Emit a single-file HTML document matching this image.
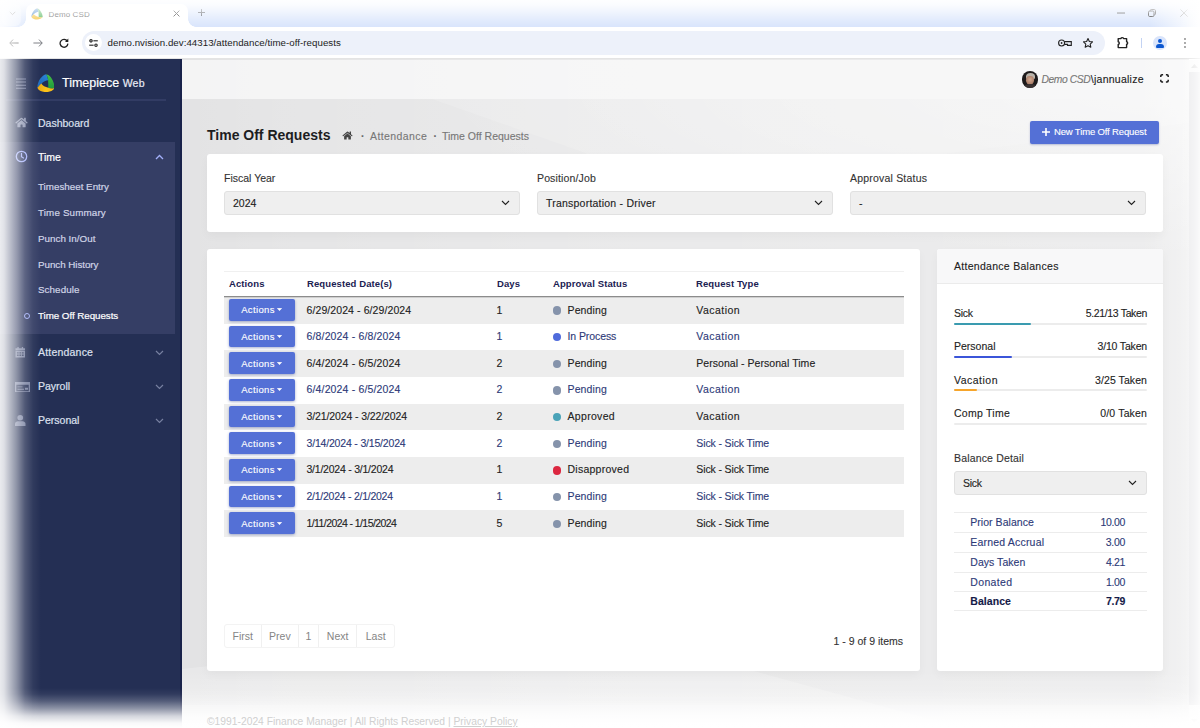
<!DOCTYPE html>
<html lang="en">
<head>
<meta charset="utf-8">
<title>Demo CSD</title>
<style>
*{box-sizing:border-box;margin:0;padding:0}
html,body{width:1200px;height:728px;overflow:hidden;background:#fff}
body{font-family:"Liberation Sans",sans-serif;font-size:11px;color:#222;position:relative;-webkit-text-stroke:.12px}
.abs{position:absolute}
svg{display:block}
/* ---------- browser chrome ---------- */
#tabstrip{left:0;top:0;width:1200px;height:27px;background:#d9e5fc}
#tab{left:26px;top:4px;width:162px;height:23px;background:#fff;border-radius:7px 7px 0 0}
#tab .t{left:22.500px;top:5.500px;font-size:8px;color:#505050;letter-spacing:.1px;white-space:nowrap}
#toolbar{left:0;top:27px;width:1200px;height:32px;background:#fff;border-bottom:1px solid #e4e4e4}
#omni{left:82px;top:4px;width:1022.500px;height:23.600px;border-radius:12px;background:#edf1fa}
#omni .u{left:25.500px;top:6.200px;font-size:9.700px;color:#222;letter-spacing:.05px;white-space:nowrap}
/* ---------- app ---------- */
#side{left:0;top:59px;width:182px;height:669px;background:#242f54;border-right:2px solid #19224a}
#side .sec{left:0;top:83px;width:175px;height:192px;background:#353e65}
#side .hr{left:6px;top:40px;width:160px;height:2px;background:#323c64}
.nav{color:#dde0ee;font-size:10.5px;white-space:nowrap}
.sub{color:#d0d4e6;font-size:9.800px;white-space:nowrap}
#main{left:182px;top:59px;width:1007px;height:669px;background:#e3e3e4;overflow:hidden}
#hdr{left:0;top:1px;width:1007px;height:39px;background:rgba(255,255,255,.6)}
.card{background:#fff;border-radius:3px;box-shadow:0 4px 10px rgba(0,0,0,.035)}
.lbl{font-size:10.5px;color:#333;white-space:nowrap}
.sel{height:24px;background:#efefef;border:1px solid #e1e1e1;border-radius:3px}
.sel>span{position:absolute;left:8px;top:5px;font-size:10.5px;color:#222;white-space:nowrap}
.sel svg{position:absolute;right:9px;top:8px}

#bg{left:0;top:0;width:1007px;height:669px}
.bc{top:71px;font-size:10.5px;color:#777;white-space:nowrap}
.th{-webkit-text-stroke:0;top:28.600px;font-size:9.5px;font-weight:700;color:#1b2152;white-space:nowrap;letter-spacing:.1px}
.row{position:absolute;left:0;width:680px;height:26.65px}
.row.odd{background:#ededed}
.row.even{color:#2d3a78}
.row .c{top:6.500px;font-size:10.5px;white-space:nowrap;letter-spacing:.1px}
.abtn{left:5.200px;top:2.200px;width:65.800px;height:21.600px;background:#5470d6;border-radius:2px;box-shadow:0 1px 3px rgba(40,60,140,.4)}
.abtn span{position:absolute;left:12px;top:5.300px;font-size:9.500px;color:#fff;letter-spacing:0.350px}
.abtn svg{position:absolute;left:47.700px;top:9.200px}
.dot{left:328.800px;top:9.400px;width:8.400px;height:8.400px;border-radius:50%}
.pg{border:1px solid #f3f3f3;border-radius:3px;display:flex}
.pg span{border-color:#f3f3f3;display:block;height:22px;line-height:22px;text-align:center;font-size:10.5px;color:#858585;-webkit-text-stroke:0;border-right:1px solid #f0f0f0}
.bal{left:17px;width:193px;height:20px}
.bal>span{position:absolute;left:0;top:.700px;font-size:10.5px;color:#222;white-space:nowrap}
.bal b{position:absolute;right:0;top:.700px;font-size:10.5px;font-weight:400;color:#222;white-space:nowrap}
.bal i{position:absolute;left:0;top:16px;width:193px;height:2px;background:#ececec;border-radius:1px}
.bal u{display:block;height:2px;border-radius:1px}
.dt{left:17px;width:193px;height:20px;border-top:1px solid #ececec;color:#2d3a78;font-size:10.5px}
.dt>span{position:absolute;left:16.300px;top:3px;white-space:nowrap}
.dt b{position:absolute;right:22px;top:3px;font-weight:400;white-space:nowrap}
.dt.tot{border-bottom:1px solid #ececec;color:#151a48;font-weight:700}
.dt.tot b{font-weight:700}
#scroll{left:1189px;top:60px;width:11px;height:668px;background:#fbfbfb}
#scroll .thumb{left:0;top:12px;width:11px;height:633px;background:#ececee}
#vig{left:0;top:0;width:1200px;height:728px;pointer-events:none;
 background:
  linear-gradient(to right,rgba(255,255,255,.9) 0,rgba(255,255,255,.85) 4px,rgba(255,255,255,.7) 9px,rgba(255,255,255,.47) 17px,rgba(255,255,255,.2) 25px,rgba(255,255,255,.06) 33px,rgba(255,255,255,0) 41px) left/42px 100% no-repeat,
  linear-gradient(to top,#fff 0,rgba(255,255,255,.97) 5px,rgba(255,255,255,.8) 12px,rgba(255,255,255,.5) 19px,rgba(255,255,255,.22) 27px,rgba(255,255,255,.06) 34px,rgba(255,255,255,0) 40px) bottom/100% 42px no-repeat,
  linear-gradient(to left,rgba(255,255,255,.75) 0,rgba(255,255,255,.4) 6px,rgba(255,255,255,.12) 14px,rgba(255,255,255,0) 22px) right/24px 100% no-repeat,
  linear-gradient(to bottom,rgba(255,255,255,.97) 0,rgba(255,255,255,.88) 5px,rgba(255,255,255,.6) 12px,rgba(255,255,255,.25) 20px,rgba(255,255,255,0) 27px) top/100% 27px no-repeat}
#tabstrip,#toolbar{-webkit-text-stroke:0}
#foot{left:207px;top:716px;font-size:10.300px;color:#d0d0d0;white-space:nowrap;-webkit-text-stroke:0}
#side{-webkit-text-stroke:.2px}
</style>
</head>
<body>
<!-- browser chrome -->
<div id="tabstrip" class="abs">
  <div class="abs" style="left:2px;top:4px;width:19px;height:22px;border-radius:6px;background:rgba(255,255,255,.35)"></div>
  <svg class="abs" style="left:9px;top:11px" width="7" height="5" viewBox="0 0 7 5"><path d="M.7.8 3.500 3.600 6.300.8" fill="none" stroke="#555" stroke-width="1"/></svg>
  <div id="tab" class="abs">
    <svg class="abs" style="left:5px;top:4px" width="12" height="12" viewBox="0 0 100 100" opacity=".85">
      <path d="M52 2 C25 12 4 45 3 74 L22 52 C35 38 50 32 63 31 L58 12 Z" fill="#1f6fc4"/>
      <path d="M52 2 C75 12 96 45 98 76 C88 79 75 79 64 76 L63 31 C62 20 58 10 52 2Z" fill="#2fa83a"/>
      <path d="M3 74 C25 104 80 100 98 76 C85 80 72 78 64 74 C45 70 30 62 22 50 Z" fill="#f5b916"/>
    </svg>
    <span class="t abs">Demo CSD</span>
    <svg class="abs" style="left:147px;top:6px" width="7" height="7" viewBox="0 0 7 7"><path d="M.6.600 6.400 6.400M6.400.600.600 6.400" stroke="#333" stroke-width="1"/></svg>
  </div>
  <div class="abs" style="left:18px;top:19px;width:8px;height:8px;background:radial-gradient(circle at 0 0,transparent 7.500px,#fff 8px)"></div>
  <div class="abs" style="left:188px;top:19px;width:8px;height:8px;background:radial-gradient(circle at 100% 0,transparent 7.500px,#fff 8px)"></div>
  <svg class="abs" style="left:198px;top:9px" width="7" height="7" viewBox="0 0 7 7"><path d="M3.500 0v7M0 3.500h7" stroke="#4a4f58" stroke-width="1"/></svg>
  <!-- window controls -->
  <svg class="abs" style="left:1117px;top:12px" width="8" height="2" viewBox="0 0 8 2"><path d="M0 1h8" stroke="#2a2a2a" stroke-width="1"/></svg>
  <svg class="abs" style="left:1148px;top:9px" width="8" height="8" viewBox="0 0 8 8"><rect x=".5" y="2" width="5.500" height="5.500" rx="1.200" fill="none" stroke="#2a2a2a" stroke-width="1"/><path d="M2.300 1.500V1.400C2.300.9 2.700.5 3.200.5H6.300C7 .5 7.500 1 7.500 1.700V4.800C7.500 5.300 7.100 5.700 6.600 5.700" fill="none" stroke="#2a2a2a" stroke-width="1"/></svg>
  <svg class="abs" style="left:1180px;top:9px" width="8" height="8" viewBox="0 0 8 8"><path d="M.4.400 7.600 7.600M7.600.400.400 7.600" stroke="#2a2a2a" stroke-width="1"/></svg>
  <div class="abs" style="left:1150px;top:0;width:50px;height:27px;background:linear-gradient(to right,rgba(255,255,255,0),rgba(255,255,255,.55) 55%,rgba(255,255,255,.95))"></div>
</div>
<div id="toolbar" class="abs">
  <svg class="abs" style="left:9px;top:12px" width="10" height="8" viewBox="0 0 10 8"><path d="M4 .600.800 4 4 7.400M.800 4H9.600" fill="none" stroke="#555" stroke-width="1"/></svg>
  <svg class="abs" style="left:33px;top:12px" width="10" height="8" viewBox="0 0 10 8"><path d="M6 .600 9.200 4 6 7.400M9.200 4H.4" fill="none" stroke="#7a7d82" stroke-width="1"/></svg>
  <svg class="abs" style="left:59px;top:11px" width="10" height="10" viewBox="0 0 10 10"><path d="M8.300 3.200A3.900 3.900 0 1 0 8.900 5.600" fill="none" stroke="#222" stroke-width="1.300"/><path d="M9.300.600V3.900H6z" fill="#222"/></svg>
  <div id="omni" class="abs">
    <div class="abs" style="left:3.300px;top:3.300px;width:17px;height:17px;border-radius:50%;background:#fff"></div>
    <svg class="abs" style="left:7.300px;top:7.800px" width="9" height="8" viewBox="0 0 9 8"><g fill="none" stroke="#222" stroke-width="1.100"><circle cx="2" cy="1.800" r="1.200"/><path d="M4.400 1.800H8.800"/><circle cx="7" cy="6.200" r="1.200"/><path d="M.2 6.200H4.600"/></g></svg>
    <span class="u abs">demo.nvision.dev:44313/attendance/time-off-requests</span>
    <svg class="abs" style="left:976px;top:8px" width="14" height="8" viewBox="0 0 14 8"><circle cx="3.600" cy="4" r="3" fill="none" stroke="#222" stroke-width="1.100"/><circle cx="3.600" cy="4" r=".9" fill="#222"/><path d="M6.500 2.600H13.300V6.400H9.500V5.400H6.500" fill="none" stroke="#222" stroke-width="1.100"/></svg>
    <svg class="abs" style="left:1000px;top:6px" width="12" height="12" viewBox="0 0 24 24"><path d="M12 3.200l2.700 5.800 6.300.8-4.600 4.300 1.200 6.300L12 17.300 6.400 20.400l1.200-6.300L3 9.800l6.300-.8z" fill="none" stroke="#222" stroke-width="2.200" stroke-linejoin="round"/></svg>
  </div>
  <svg class="abs" style="left:1116px;top:9px" width="14" height="13" viewBox="0 0 14 13"><path d="M5 2.600C5 1.300 7.600 1.300 7.600 2.600H10.600V5.800C12 5.800 12 8.200 10.600 8.200V11.600H2.200V8.400C3.600 8.400 3.600 5.800 2.200 5.800V2.600Z" fill="none" stroke="#222" stroke-width="1.400" stroke-linejoin="round"/></svg>
  <div class="abs" style="left:1141px;top:11px;width:1px;height:10px;background:#c3d3f3"></div>
  <div class="abs" style="left:1153px;top:9px;width:14px;height:14px;border-radius:50%;background:#d9e4fb;overflow:hidden">
    <div class="abs" style="left:5px;top:3px;width:4px;height:4px;border-radius:50%;background:#0b57d0"></div>
    <div class="abs" style="left:3px;top:8px;width:8px;height:4px;border-radius:3px 3px 1px 1px;background:#0b57d0"></div>
  </div>
  <svg class="abs" style="left:1184px;top:11px" width="2" height="10" viewBox="0 0 2 10"><g fill="#777"><circle cx="1" cy="1" r=".9"/><circle cx="1" cy="5" r=".9"/><circle cx="1" cy="9" r=".9"/></g></svg>
</div>

<div id="side" class="abs">
  <!-- hamburger -->
  <svg class="abs" style="left:16px;top:18.600px" width="10.200" height="11.400" viewBox="0 0 11 12" preserveAspectRatio="none"><g stroke="#7780a0" stroke-width="1.1"><path d="M0 1h11M0 4.3h11M0 7.6h11M0 10.9h11"/></g></svg>
  <!-- logo -->
  <svg class="abs" style="left:36.600px;top:14.900px" width="17.700" height="18.400" viewBox="0 0 100 100">
    <defs>
      <linearGradient id="gb" x1="0" y1="1" x2="1" y2="0"><stop offset="0" stop-color="#1b62b5"/><stop offset="1" stop-color="#2b86d9"/></linearGradient>
      <linearGradient id="gg" x1="0" y1="0" x2="0" y2="1"><stop offset="0" stop-color="#45c043"/><stop offset="1" stop-color="#1f9a3c"/></linearGradient>
      <linearGradient id="gy" x1="0" y1="0" x2="1" y2="0"><stop offset="0" stop-color="#e9a512"/><stop offset=".5" stop-color="#fcc419"/><stop offset="1" stop-color="#f5b916"/></linearGradient>
    </defs>
    <path d="M52 0 C28 4 2 40 2 76 L24 54 C36 40 50 34 63 33 L58 12 Z" fill="url(#gb)"/>
    <path d="M52 0 C78 4 99 44 99 78 C88 81 75 80 64 77 L63 33 C62 20 58 10 52 0Z" fill="url(#gg)"/>
    <path d="M2 76 C14 108 88 108 99 78 C85 82 72 80 64 76 C46 72 32 64 24 52 Z" fill="url(#gy)"/>
  </svg>
  <span class="abs" style="left:62px;top:17px;font-size:12.5px;color:#fff;white-space:nowrap">Timepiece <span style="font-size:10.5px;color:#e9ebf5;letter-spacing:.2px">Web</span></span>
  <div class="hr abs"></div>
  <div class="sec abs"></div>
  <!-- dashboard -->
  <svg class="abs" style="left:15px;top:58px" width="13" height="11" viewBox="0 0 576 512"><path fill="#8a92af" d="M280.4 148.3 96 300.1V464a16 16 0 0 0 16 16l112.100-.3a16 16 0 0 0 15.900-16V368a16 16 0 0 1 16-16h64a16 16 0 0 1 16 16v95.600a16 16 0 0 0 16 16.100L464 480a16 16 0 0 0 16-16V300L295.700 148.300a12.200 12.200 0 0 0-15.300 0zM571.600 251.500 488 182.600V44.100a12 12 0 0 0-12-12h-56a12 12 0 0 0-12 12v72.600L318.500 43a48 48 0 0 0-61 0L4.300 251.500a12 12 0 0 0-1.600 16.900l25.500 31a12 12 0 0 0 16.900 1.600l235.300-193.800a12.200 12.200 0 0 1 15.300 0L530.900 301a12 12 0 0 0 16.900-1.600l25.500-31a12 12 0 0 0-1.700-16.900z"/></svg>
  <span class="nav abs" style="left:38px;top:58px">Dashboard</span>
  <!-- time -->
  <svg class="abs" style="left:15px;top:91.400px" width="13" height="13" viewBox="0 0 13 13"><circle cx="6.500" cy="6.500" r="5.200" fill="none" stroke="#a3b0fa" stroke-width="1.300"/><path d="M6.500 3.400V6.700L8.500 8" fill="none" stroke="#a3b0fa" stroke-width="1.200" stroke-linecap="round"/></svg>
  <span class="nav abs" style="left:38px;top:92px;color:#fff">Time</span>
  <svg class="abs" style="left:155px;top:95px" width="9" height="6" viewBox="0 0 9 6"><path d="M1 5 4.500 1.500 8 5" fill="none" stroke="#a3b0fa" stroke-width="1.300"/></svg>
  <span class="sub abs" style="left:38px;top:122px;letter-spacing:0.001px">Timesheet Entry</span>
  <span class="sub abs" style="left:38px;top:148px;letter-spacing:0.153px">Time Summary</span>
  <span class="sub abs" style="left:38px;top:174px;letter-spacing:0.017px">Punch In/Out</span>
  <span class="sub abs" style="left:38px;top:200px;letter-spacing:-0.046px">Punch History</span>
  <span class="sub abs" style="left:38px;top:225px;letter-spacing:0.079px">Schedule</span>
  <div class="abs" style="left:24px;top:254px;width:6px;height:6px;border:1.500px solid #a3b0fa;border-radius:50%"></div>
  <span class="sub abs" style="left:38px;top:251px;color:#fff;letter-spacing:-0.056px">Time Off Requests</span>
  <!-- attendance -->
  <svg class="abs" style="left:15px;top:287.800px" width="10.500" height="11" viewBox="0 0 11 13" preserveAspectRatio="none"><path fill="#7780a0" d="M2.500 0h1.400v1.600h3.200V0h1.400v1.600H10.500V4H.5V1.600h2zM.5 4.800h10V12.500H.5zM2 6.200v1.600h1.800V6.200zM4.600 6.200v1.600h1.800V6.200zM7.200 6.200v1.600H9V6.200zM2 9v1.600h1.800V9zM4.600 9v1.600h1.800V9zM7.200 9v1.600H9V9z" fill-rule="evenodd"/></svg>
  <span class="nav abs" style="left:38px;top:287px;letter-spacing:.2px">Attendance</span>
  <svg class="abs" style="left:155px;top:291px" width="9" height="6" viewBox="0 0 9 6"><path d="M1 1 4.500 4.500 8 1" fill="none" stroke="#7780a0" stroke-width="1.200"/></svg>
  <!-- payroll -->
  <svg class="abs" style="left:15px;top:322.600px" width="15" height="10.500" preserveAspectRatio="none" viewBox="0 0 15 11"><path fill="#7780a0" fill-rule="evenodd" d="M0 0h15v11H0zM1.300 3v6.700h12.400V3zM2.500 4.600h5v1h-5zM2.500 7h6.500v1H2.500zM10 6h3v2h-3z"/></svg>
  <span class="nav abs" style="left:38px;top:321px">Payroll</span>
  <svg class="abs" style="left:155px;top:325px" width="9" height="6" viewBox="0 0 9 6"><path d="M1 1 4.500 4.500 8 1" fill="none" stroke="#7780a0" stroke-width="1.200"/></svg>
  <!-- personal -->
  <svg class="abs" style="left:15.400px;top:356.300px" width="10.500" height="11" viewBox="0 0 11 12" preserveAspectRatio="none"><circle cx="5.500" cy="3" r="3" fill="#7780a0"/><path d="M0 12V9.500C0 7.800 1.600 6.800 3 6.800h5c1.400 0 3 1 3 2.700V12z" fill="#7780a0"/></svg>
  <span class="nav abs" style="left:38px;top:355px">Personal</span>
  <svg class="abs" style="left:155px;top:359px" width="9" height="6" viewBox="0 0 9 6"><path d="M1 1 4.500 4.500 8 1" fill="none" stroke="#7780a0" stroke-width="1.200"/></svg>
</div>
<!-- main -->
<div id="main" class="abs">
  <svg id="bg" class="abs" width="1007" height="669" viewBox="0 0 1007 669">
    <defs>
      <linearGradient id="lg1" x1="0" y1="0" x2="1" y2="0"><stop offset="0" stop-color="#fff" stop-opacity="0"/><stop offset=".1" stop-color="#fff" stop-opacity=".1"/><stop offset=".4" stop-color="#fff" stop-opacity=".24"/><stop offset=".96" stop-color="#fff" stop-opacity=".34"/><stop offset="1" stop-color="#fff" stop-opacity=".55"/></linearGradient>
      <radialGradient id="lg2" cx="0" cy="0" r="1" gradientUnits="userSpaceOnUse" gradientTransform="translate(1007 30) scale(760 170)"><stop offset="0" stop-color="#fff" stop-opacity=".6"/><stop offset=".5" stop-color="#fff" stop-opacity=".3"/><stop offset="1" stop-color="#fff" stop-opacity="0"/></radialGradient>
      <linearGradient id="lg3" x1="0" y1="0" x2="0" y2="1"><stop offset="0" stop-color="#fff" stop-opacity="0"/><stop offset="1" stop-color="#fff" stop-opacity=".3"/></linearGradient>
    </defs>
    <rect x="0" y="0" width="1007" height="669" fill="url(#lg1)"/>
    <rect x="0" y="40" width="1007" height="200" fill="url(#lg2)"/>
    <polygon points="250,40 1007,40 1007,64 500,128" fill="#fff" opacity=".14"/>
    <polygon points="0,610 400,565 780,669 0,669" fill="#fff" opacity=".2"/>
    <rect x="0" y="612" width="1007" height="34" fill="url(#lg3)"/>
    <rect x="0" y="646" width="1007" height="23" fill="#fff" opacity=".42"/>
  </svg>
  <div id="hdr" class="abs"></div>
  <!-- user -->
  <div class="abs" style="left:839.700px;top:12px;width:16.600px;height:16.600px;border-radius:50%;overflow:hidden;background:#1d1a1b">
    <div class="abs" style="left:4px;top:2px;width:9px;height:7px;border-radius:50% 50% 40% 40%;background:#b9b3aa"></div>
    <div class="abs" style="left:4.500px;top:4.500px;width:8px;height:9.500px;border-radius:45% 45% 50% 50%;background:radial-gradient(circle at 50% 40%,#d3aa92,#a87b66 70%,#6f4e42)"></div>
    <div class="abs" style="left:2px;top:13px;width:13px;height:5px;border-radius:50% 50% 0 0;background:#3a3232"></div>
  </div>
  <span class="abs" style="left:859.500px;top:14px;font-size:10.500px;white-space:nowrap;color:#222"><i style="display:inline-block;width:49.300px;color:#777;font-size:10.300px;letter-spacing:-.42px">Demo CSD</i><span style="letter-spacing:.25px">\jannualize</span></span>
  <svg class="abs" style="left:978px;top:15.300px" width="9" height="8.700" viewBox="0 0 9 8.700"><path d="M.8 3V2A1.200 1.200 0 0 1 2 .8H3.100M5.900 .8H7A1.200 1.200 0 0 1 8.200 2V3M8.200 5.700V6.700A1.200 1.200 0 0 1 7 7.900H5.900M3.100 7.900H2A1.200 1.200 0 0 1 .8 6.700V5.700" fill="none" stroke="#1c1c1c" stroke-width="1.500"/></svg>
  <!-- title -->
  <span class="abs" style="left:25px;top:68px;font-size:14px;font-weight:700;color:#1d1d1f;-webkit-text-stroke:0;white-space:nowrap">Time Off Requests</span>
  <svg class="abs" style="left:160px;top:72px" width="11" height="9" viewBox="0 0 576 512"><path fill="#444" d="M280.4 148.3 96 300.1V464a16 16 0 0 0 16 16l112.100-.3a16 16 0 0 0 15.900-16V368a16 16 0 0 1 16-16h64a16 16 0 0 1 16 16v95.600a16 16 0 0 0 16 16.100L464 480a16 16 0 0 0 16-16V300L295.700 148.300a12.200 12.200 0 0 0-15.300 0zM571.600 251.500 488 182.600V44.100a12 12 0 0 0-12-12h-56a12 12 0 0 0-12 12v72.600L318.500 43a48 48 0 0 0-61 0L4.300 251.500a12 12 0 0 0-1.600 16.900l25.500 31a12 12 0 0 0 16.900 1.600l235.300-193.800a12.200 12.200 0 0 1 15.300 0L530.900 301a12 12 0 0 0 16.900-1.600l25.500-31a12 12 0 0 0-1.700-16.900z"/></svg>
  <span class="bc abs" style="left:179px;font-weight:700;color:#666">&middot;</span>
  <span class="bc abs" style="left:188px;letter-spacing:.4px">Attendance</span>
  <span class="bc abs" style="left:251.500px;font-weight:700;color:#666">&middot;</span>
  <span class="bc abs" style="left:260px">Time Off Requests</span>
  <!-- new button -->
  <div class="abs" style="left:848px;top:62px;width:129.200px;height:22.600px;background:#5470d6;border-radius:2px;box-shadow:0 1px 2px rgba(40,60,140,.3)">
    <svg class="abs" style="left:12px;top:7px" width="8" height="8" viewBox="0 0 8 8"><path d="M4 0v8M0 4h8" stroke="#fff" stroke-width="1.600"/></svg>
    <span class="abs" style="left:24px;top:5px;font-size:9.5px;color:#fff;white-space:nowrap;letter-spacing:-.15px">New Time Off Request</span>
  </div>
  <!-- filter card -->
  <div class="card abs" style="left:25px;top:95px;width:956px;height:78px">
    <span class="lbl abs" style="left:17px;top:17.700px">Fiscal Year</span>
    <div class="sel abs" style="left:17px;top:37px;width:296px"><span>2024</span><svg width="9" height="6" viewBox="0 0 9 6"><path d="M1 1 4.5 4.5 8 1" fill="none" stroke="#222" stroke-width="1.1"/></svg></div>
    <span class="lbl abs" style="left:330px;top:17.700px;letter-spacing:.14px">Position/Job</span>
    <div class="sel abs" style="left:330px;top:37px;width:296px"><span style="letter-spacing:.22px">Transportation - Driver</span><svg width="9" height="6" viewBox="0 0 9 6"><path d="M1 1 4.5 4.5 8 1" fill="none" stroke="#222" stroke-width="1.1"/></svg></div>
    <span class="lbl abs" style="left:643px;top:17.700px;letter-spacing:.2px">Approval Status</span>
    <div class="sel abs" style="left:643px;top:37px;width:296px"><span>-</span><svg width="9" height="6" viewBox="0 0 9 6"><path d="M1 1 4.5 4.5 8 1" fill="none" stroke="#222" stroke-width="1.1"/></svg></div>
  </div>
  <!-- table card -->
  <div class="card abs" style="left:25px;top:190px;width:713px;height:421.500px">
    <div class="abs" style="left:17px;top:22px;width:680px;height:1px;background:#f0f0f0"></div>
    <span class="th abs" style="left:22px">Actions</span>
    <span class="th abs" style="left:100px">Requested Date(s)</span>
    <span class="th abs" style="left:290px">Days</span>
    <span class="th abs" style="left:346px">Approval Status</span>
    <span class="th abs" style="left:489px">Request Type</span>
    
    <div id="rows" class="abs" style="left:17px;top:0;width:680px">
    <div class="row odd" style="top:48.00px">
      <div class="abtn abs"><span>Actions</span><svg width="5" height="3" viewBox="0 0 5 3"><path d="M.3.300h4.400L2.500 2.700z" fill="#fff" stroke="#fff" stroke-width=".5" stroke-linejoin="round"/></svg></div>
      <span class="c abs" style="left:82.500px;letter-spacing:0.093px">6/29/2024 - 6/29/2024</span>
      <span class="c abs" style="left:272.500px">1</span>
      <i class="dot abs" style="background:#8593ab"></i>
      <span class="c abs" style="left:343.500px;letter-spacing:0.138px">Pending</span>
      <span class="c abs" style="left:472.300px;letter-spacing:0.458px">Vacation</span>
    </div>
    <div class="row even" style="top:74.65px">
      <div class="abtn abs"><span>Actions</span><svg width="5" height="3" viewBox="0 0 5 3"><path d="M.3.300h4.400L2.500 2.700z" fill="#fff" stroke="#fff" stroke-width=".5" stroke-linejoin="round"/></svg></div>
      <span class="c abs" style="left:82.500px;letter-spacing:0.154px">6/8/2024 - 6/8/2024</span>
      <span class="c abs" style="left:272.500px">1</span>
      <i class="dot abs" style="background:#4f6bdc"></i>
      <span class="c abs" style="left:343.500px;letter-spacing:-0.090px">In Process</span>
      <span class="c abs" style="left:472.300px;letter-spacing:0.458px">Vacation</span>
    </div>
    <div class="row odd" style="top:101.30px">
      <div class="abtn abs"><span>Actions</span><svg width="5" height="3" viewBox="0 0 5 3"><path d="M.3.300h4.400L2.500 2.700z" fill="#fff" stroke="#fff" stroke-width=".5" stroke-linejoin="round"/></svg></div>
      <span class="c abs" style="left:82.500px;letter-spacing:0.154px">6/4/2024 - 6/5/2024</span>
      <span class="c abs" style="left:272.500px">2</span>
      <i class="dot abs" style="background:#8593ab"></i>
      <span class="c abs" style="left:343.500px;letter-spacing:0.138px">Pending</span>
      <span class="c abs" style="left:472.300px;letter-spacing:0.046px">Personal - Personal Time</span>
    </div>
    <div class="row even" style="top:127.95px">
      <div class="abtn abs"><span>Actions</span><svg width="5" height="3" viewBox="0 0 5 3"><path d="M.3.300h4.400L2.500 2.700z" fill="#fff" stroke="#fff" stroke-width=".5" stroke-linejoin="round"/></svg></div>
      <span class="c abs" style="left:82.500px;letter-spacing:0.154px">6/4/2024 - 6/5/2024</span>
      <span class="c abs" style="left:272.500px">2</span>
      <i class="dot abs" style="background:#8593ab"></i>
      <span class="c abs" style="left:343.500px;letter-spacing:0.138px">Pending</span>
      <span class="c abs" style="left:472.300px;letter-spacing:0.458px">Vacation</span>
    </div>
    <div class="row odd" style="top:154.60px">
      <div class="abtn abs"><span>Actions</span><svg width="5" height="3" viewBox="0 0 5 3"><path d="M.3.300h4.400L2.500 2.700z" fill="#fff" stroke="#fff" stroke-width=".5" stroke-linejoin="round"/></svg></div>
      <span class="c abs" style="left:82.500px;letter-spacing:-0.107px">3/21/2024 - 3/22/2024</span>
      <span class="c abs" style="left:272.500px">2</span>
      <i class="dot abs" style="background:#4aa3b8"></i>
      <span class="c abs" style="left:343.500px;letter-spacing:0.319px">Approved</span>
      <span class="c abs" style="left:472.300px;letter-spacing:0.458px">Vacation</span>
    </div>
    <div class="row even" style="top:181.25px">
      <div class="abtn abs"><span>Actions</span><svg width="5" height="3" viewBox="0 0 5 3"><path d="M.3.300h4.400L2.500 2.700z" fill="#fff" stroke="#fff" stroke-width=".5" stroke-linejoin="round"/></svg></div>
      <span class="c abs" style="left:82.500px;letter-spacing:-0.179px">3/14/2024 - 3/15/2024</span>
      <span class="c abs" style="left:272.500px">2</span>
      <i class="dot abs" style="background:#8593ab"></i>
      <span class="c abs" style="left:343.500px;letter-spacing:0.138px">Pending</span>
      <span class="c abs" style="left:472.300px;letter-spacing:-0.120px">Sick - Sick Time</span>
    </div>
    <div class="row odd" style="top:207.90px">
      <div class="abtn abs"><span>Actions</span><svg width="5" height="3" viewBox="0 0 5 3"><path d="M.3.300h4.400L2.500 2.700z" fill="#fff" stroke="#fff" stroke-width=".5" stroke-linejoin="round"/></svg></div>
      <span class="c abs" style="left:82.500px;letter-spacing:-0.228px">3/1/2024 - 3/1/2024</span>
      <span class="c abs" style="left:272.500px">1</span>
      <i class="dot abs" style="background:#dc2740"></i>
      <span class="c abs" style="left:343.500px;letter-spacing:0.255px">Disapproved</span>
      <span class="c abs" style="left:472.300px;letter-spacing:-0.120px">Sick - Sick Time</span>
    </div>
    <div class="row even" style="top:234.55px">
      <div class="abtn abs"><span>Actions</span><svg width="5" height="3" viewBox="0 0 5 3"><path d="M.3.300h4.400L2.500 2.700z" fill="#fff" stroke="#fff" stroke-width=".5" stroke-linejoin="round"/></svg></div>
      <span class="c abs" style="left:82.500px;letter-spacing:-0.254px">2/1/2024 - 2/1/2024</span>
      <span class="c abs" style="left:272.500px">1</span>
      <i class="dot abs" style="background:#8593ab"></i>
      <span class="c abs" style="left:343.500px;letter-spacing:0.138px">Pending</span>
      <span class="c abs" style="left:472.300px;letter-spacing:-0.120px">Sick - Sick Time</span>
    </div>
    <div class="row odd" style="top:261.20px">
      <div class="abtn abs"><span>Actions</span><svg width="5" height="3" viewBox="0 0 5 3"><path d="M.3.300h4.400L2.500 2.700z" fill="#fff" stroke="#fff" stroke-width=".5" stroke-linejoin="round"/></svg></div>
      <span class="c abs" style="left:82.500px;letter-spacing:-0.582px">1/11/2024 - 1/15/2024</span>
      <span class="c abs" style="left:272.500px">5</span>
      <i class="dot abs" style="background:#8593ab"></i>
      <span class="c abs" style="left:343.500px;letter-spacing:0.138px">Pending</span>
      <span class="c abs" style="left:472.300px;letter-spacing:-0.120px">Sick - Sick Time</span>
    </div>
    </div>
    <div class="abs" style="left:17px;top:47px;width:680px;height:2px;background:linear-gradient(to bottom,#8c8c8c 0,#8c8c8c 1px,#cfcfcf 1px,#cfcfcf 2px)"></div>
    <div class="pg abs" style="left:17px;top:375px;width:171px;height:24px">
      <span style="width:37px">First</span><span style="width:38px">Prev</span><span style="width:20px">1</span><span style="width:39px">Next</span><span style="width:37px;border-right:0">Last</span>
    </div>
    <span class="abs" style="right:17px;top:386px;font-size:10.5px;color:#333;white-space:nowrap">1 - 9 of 9 items</span>
  </div>
  <!-- balances card -->
  <div class="card abs" style="left:755px;top:190px;width:226px;height:421.500px">
    <div class="abs" style="left:0;top:0;width:226px;height:35px;background:#f8f8f9;border-bottom:1px solid #ebebeb;border-radius:3px 3px 0 0"></div>
    <span class="abs" style="left:17px;top:11px;font-size:10.5px;color:#222;white-space:nowrap"><span style="letter-spacing:0.287px">Attendance Balances</span></span>
    <div class="bal abs" style="top:57.600px"><span><span style="letter-spacing:-0.284px">Sick</span></span><b><span style="letter-spacing:-0.350px">5.21/13 Taken</span></b><i><u style="width:40%;background:#3a9bb0"></u></i></div>
    <div class="bal abs" style="top:90.800px"><span><span style="letter-spacing:0.007px">Personal</span></span><b><span style="letter-spacing:-0.168px">3/10 Taken</span></b><i><u style="width:30%;background:#3b55d9"></u></i></div>
    <div class="bal abs" style="top:124.300px"><span><span style="letter-spacing:0.490px">Vacation</span></span><b><span style="letter-spacing:0.072px">3/25 Taken</span></b><i><u style="width:12%;background:#f6a52b"></u></i></div>
    <div class="bal abs" style="top:157.5px"><span><span style="letter-spacing:0.258px">Comp Time</span></span><b><span style="letter-spacing:0.151px">0/0 Taken</span></b><i></i></div>
    <span class="lbl abs" style="left:17px;top:203px"><span style="letter-spacing:0.164px">Balance Detail</span></span>
    <div class="sel abs" style="left:17px;top:222px;width:193px"><span><span style="letter-spacing:-0.284px">Sick</span></span><svg width="9" height="6" viewBox="0 0 9 6"><path d="M1 1 4.5 4.5 8 1" fill="none" stroke="#222" stroke-width="1.1"/></svg></div>
    <div class="dt abs" style="top:263px"><span><span style="letter-spacing:0.036px">Prior Balance</span></span><b><span style="letter-spacing:-0.350px">10.00</span></b></div>
    <div class="dt abs" style="top:282.900px"><span><span style="letter-spacing:0.192px">Earned Accrual</span></span><b><span style="letter-spacing:-0.309px">3.00</span></b></div>
    <div class="dt abs" style="top:302.700px"><span><span style="letter-spacing:0.033px">Days Taken</span></span><b><span style="letter-spacing:-0.350px">4.21</span></b></div>
    <div class="dt abs" style="top:322.5px"><span><span style="letter-spacing:0.329px">Donated</span></span><b><span style="letter-spacing:-0.350px">1.00</span></b></div>
    <div class="dt tot abs" style="top:342.400px"><span><span style="letter-spacing:0.061px">Balance</span></span><b><span style="letter-spacing:-0.350px">7.79</span></b></div>
  </div>
</div>
<div id="scroll" class="abs"><div class="thumb abs"></div>
  <svg class="abs" style="left:2px;top:4px" width="7" height="4" viewBox="0 0 7 4"><path d="M0 4 3.500 0 7 4z" fill="#e4e4e4"/></svg>
  <svg class="abs" style="left:2px;top:659px" width="7" height="4" viewBox="0 0 7 4"><path d="M0 0 3.500 4 7 0z" fill="#d0d0d0"/></svg>
</div>
<div id="vig" class="abs"></div>
<span id="foot" class="abs">&copy;1991-2024 Finance Manager | All Rights Reserved | <u>Privacy Policy</u></span>

</body>
</html>
